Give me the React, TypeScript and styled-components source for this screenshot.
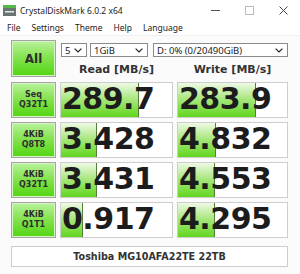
import React from "react";
import styled, { createGlobalStyle } from "styled-components";

const Global = createGlobalStyle`
  html, body { margin: 0; padding: 0; background: #ffffff; }
  body { width: 300px; height: 274px; overflow: hidden; }
`;

const Window = styled.div`
  width: 300px;
  height: 274px;
  background: #fbfbfb;
  font-family: "Noto Sans", "Open Sans", sans-serif;
  color: #222;
  display: flex;
  flex-direction: column;
`;

const TitleBar = styled.div`
  height: 20px;
  background: #ffffff;
  display: flex;
  align-items: center;
  padding-left: 3px;
`;

const AppIcon = styled.svg`
  width: 13px;
  height: 11px;
  margin-right: 4px;
  flex: none;
`;

const Title = styled.span`
  font-size: 8.5px;
  color: #222;
  flex: 1;
`;

const WinControls = styled.div`
  display: flex;
  align-items: center;
  height: 20px;
`;

const WinButton = styled.div`
  width: 34px;
  height: 20px;
  display: flex;
  align-items: center;
  justify-content: center;
`;

const MenuBar = styled.div`
  height: 15px;
  background: #ffffff;
  display: flex;
  align-items: center;
  padding-left: 7px;
  gap: 11px;
  border-bottom: 1px solid #f0f0f0;
`;

const MenuItem = styled.span`
  font-size: 8.5px;
  color: #222;
`;

const Main = styled.div`
  padding: 4px 12px 0 11px;
  display: grid;
  grid-template-columns: 45px 113px 111px;
  column-gap: 4px;
  grid-auto-rows: auto;
`;

const GreenButton = styled.div<{ $big?: boolean }>`
  box-sizing: border-box;
  height: ${(p) => (p.$big ? "37px" : "36px")};
  border: 1px solid #a3a3a3;
  box-shadow: inset 0 0 0 1px #d7f5c4;
  background: linear-gradient(to bottom, #b9f29c 0%, #86e352 45%, #52d512 100%);
  display: flex;
  flex-direction: column;
  align-items: center;
  justify-content: center;
  font-family: "DejaVu Sans", Verdana, sans-serif;
  font-weight: bold;
  color: #2e2e2e;
  font-size: ${(p) => (p.$big ? "12px" : "8px")};
  line-height: ${(p) => (p.$big ? "14px" : "10.5px")};
  text-align: center;
`;

const TopRight = styled.div`
  grid-column: 2 / 4;
  display: flex;
  flex-direction: column;
`;

const Selectors = styled.div`
  display: flex;
  margin-top: 3px;
  margin-left: 1px;
  height: 14px;
`;

const Select = styled.div<{ $w: number; $gap: number }>`
  box-sizing: border-box;
  width: ${(p) => p.$w}px;
  margin-right: ${(p) => p.$gap}px;
  height: 14px;
  border: 1px solid #8a8a8a;
  background: #ffffff;
  display: flex;
  align-items: center;
  justify-content: space-between;
  padding: 0 4px 0 3px;
  font-size: 9.5px;
  color: #222;
`;

const Headers = styled.div`
  display: grid;
  grid-template-columns: 113px 111px;
  column-gap: 4px;
  margin-top: 6px;
`;

const Header = styled.div`
  font-family: "DejaVu Sans", Verdana, sans-serif;
  font-weight: bold;
  font-size: 11px;
  color: #333;
  text-align: center;
  line-height: 14px;
`;

const Cell = styled.div`
  position: relative;
  box-sizing: border-box;
  height: 36px;
  border: 1px solid #cdcdcd;
  background: #ffffff;
  overflow: hidden;
`;

const Bar = styled.div`
  position: absolute;
  left: 0;
  top: 0;
  bottom: 0;
  background: linear-gradient(to bottom, #eef9e6 0%, #b2e98c 40%, #62d61e 100%);
  border-right: 1px solid #557f3a;
`;

const Value = styled.div`
  position: relative;
  font-family: "DejaVu Sans", Verdana, sans-serif;
  font-weight: bold;
  font-size: 30px;
  line-height: 30px;
  letter-spacing: -0.5px;
  color: #1c1c1c;
  padding-left: 1px;
  margin-top: 1px;
`;

const RowGap = styled.div<{ $h: number }>`
  grid-column: 1 / 4;
  height: ${(p) => p.$h}px;
`;

const NameBar = styled.div`
  grid-column: 1 / 4;
  box-sizing: border-box;
  height: 21px;
  border: 1px solid #cdcdcd;
  background: #ffffff;
  display: flex;
  align-items: center;
  justify-content: center;
  font-family: "DejaVu Sans", Verdana, sans-serif;
  font-weight: bold;
  font-size: 9.6px;
  color: #333;
`;

const Chevron = () => (
  <svg width="8" height="5" viewBox="0 0 8 5">
    <path d="M0.6 0.6 L4 4 L7.4 0.6" fill="none" stroke="#222" strokeWidth="1.2" />
  </svg>
);

const rows = [
  { l1: "Seq", l2: "Q32T1", r: "289.7", rw: 77, w: "283.9", ww: 77 },
  { l1: "4KiB", l2: "Q8T8", r: "3.428", rw: 35, w: "4.832", ww: 37 },
  { l1: "4KiB", l2: "Q32T1", r: "3.431", rw: 35, w: "4.553", ww: 36 },
  { l1: "4KiB", l2: "Q1T1", r: "0.917", rw: 21, w: "4.295", ww: 36 },
];

export default function App() {
  return (
    <>
      <Global />
      <Window>
        <TitleBar>
          <AppIcon viewBox="0 0 13 11">
            <rect x="0" y="0" width="13" height="11" fill="#6a7474" />
            <rect x="0" y="0" width="13" height="3" fill="#57b84a" />
            <rect x="2" y="6" width="9" height="1.5" fill="#e8e8e8" />
          </AppIcon>
          <Title>CrystalDiskMark 6.0.2 x64</Title>
          <WinControls>
            <WinButton>
              <svg width="9" height="9" viewBox="0 0 9 9">
                <path d="M0 4.5 H9" stroke="#555" strokeWidth="1" />
              </svg>
            </WinButton>
            <WinButton>
              <svg width="9" height="9" viewBox="0 0 9 9">
                <rect x="0.5" y="0.5" width="8" height="8" fill="none" stroke="#bbb" strokeWidth="1" />
              </svg>
            </WinButton>
            <WinButton>
              <svg width="9" height="9" viewBox="0 0 9 9">
                <path d="M0.5 0.5 L8.5 8.5 M8.5 0.5 L0.5 8.5" stroke="#444" strokeWidth="1" />
              </svg>
            </WinButton>
          </WinControls>
        </TitleBar>
        <MenuBar>
          <MenuItem>File</MenuItem>
          <MenuItem>Settings</MenuItem>
          <MenuItem>Theme</MenuItem>
          <MenuItem>Help</MenuItem>
          <MenuItem>Language</MenuItem>
        </MenuBar>
        <Main>
          <GreenButton $big>All</GreenButton>
          <TopRight>
            <Selectors>
              <Select $w={26} $gap={3}>
                <span>5</span>
                <Chevron />
              </Select>
              <Select $w={58} $gap={5}>
                <span>1GiB</span>
                <Chevron />
              </Select>
              <Select $w={135} $gap={0}>
                <span>D: 0% (0/20490GiB)</span>
                <Chevron />
              </Select>
            </Selectors>
            <Headers>
              <Header>Read [MB/s]</Header>
              <Header>Write [MB/s]</Header>
            </Headers>
          </TopRight>
          {rows.map((row, i) => (
            <React.Fragment key={i}>
              <RowGap $h={i === 0 ? 5 : 4} />
              <GreenButton>
                <span>{row.l1}</span>
                <span>{row.l2}</span>
              </GreenButton>
              <Cell>
                <Bar style={{ width: row.rw }} />
                <Value>{row.r}</Value>
              </Cell>
              <Cell>
                <Bar style={{ width: row.ww }} />
                <Value>{row.w}</Value>
              </Cell>
            </React.Fragment>
          ))}
          <RowGap $h={8} />
          <NameBar>Toshiba MG10AFA22TE 22TB</NameBar>
        </Main>
      </Window>
    </>
  );
}
